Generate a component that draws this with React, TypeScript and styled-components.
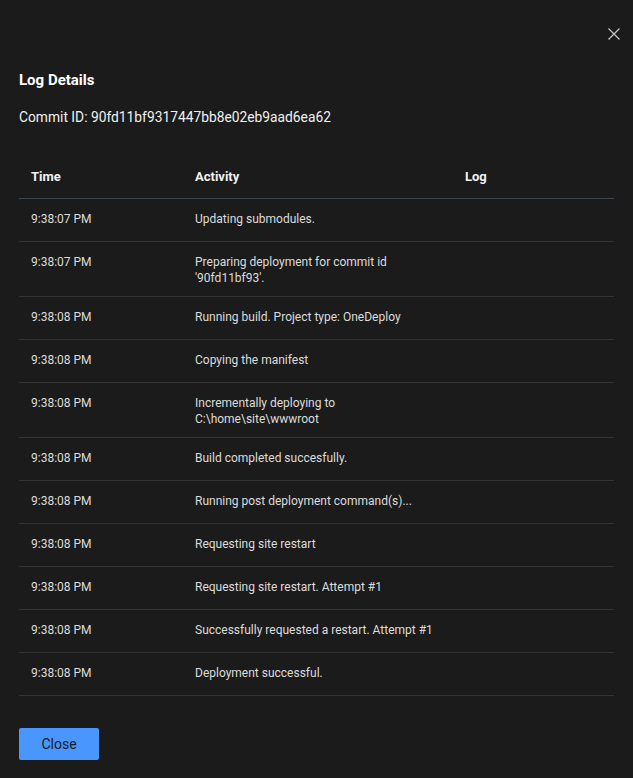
import React from "react";
import styled, { createGlobalStyle } from "styled-components";

const Global = createGlobalStyle`
  html, body { margin: 0; padding: 0; background: #1b1b1b; }
  body { font-family: Roboto, "Noto Sans", sans-serif; color: #e6e6e6; }
  * { box-sizing: border-box; }
`;

const Dialog = styled.div`
  width: 633px;
  height: 778px;
  background: #1b1b1b;
  padding: 0 19px;
  display: flex;
  flex-direction: column;
`;

const TopBar = styled.div`
  display: flex;
  justify-content: flex-end;
  padding-top: 28px;
  margin-right: -6px;
  height: 42px;
`;

const CloseIcon = styled.button`
  width: 12px;
  height: 12px;
  padding: 0;
  border: none;
  background: transparent;
  color: #c8c8c8;
  display: flex;
  align-items: center;
  justify-content: center;
`;

const Title = styled.h1`
  margin: 28px 0 0;
  font-size: 15px;
  font-weight: 700;
  color: #ffffff;
  line-height: 20px;
`;

const Commit = styled.div`
  margin-top: 17px;
  font-size: 13.8px;
  line-height: 20px;
  color: #f0f0f0;
`;

const Table = styled.div`
  margin-top: 28px;
  display: flex;
  flex-direction: column;
`;

const Row = styled.div<{ $head?: boolean }>`
  display: grid;
  grid-template-columns: 164px 270px 1fr;
  border-bottom: 1px solid ${(p) => (p.$head ? "#3a4350" : "#333333")};
  min-height: ${(p) => (p.$head ? "44px" : "43px")};
`;

const HeadCell = styled.div`
  padding: 0 12px;
  font-size: 13px;
  font-weight: 700;
  color: #f2f2f2;
  display: flex;
  align-items: center;
`;

const Cell = styled.div`
  padding: 12px 12px 10px;
  font-size: 12px;
  line-height: 16px;
  color: #dcdcdc;
`;

const Footer = styled.div`
  padding-top: 32px;
`;

const PrimaryButton = styled.button`
  width: 80px;
  height: 32px;
  background: #4a96ff;
  color: #1b1b1b;
  border: none;
  border-radius: 2px;
  font-family: inherit;
  font-size: 14px;
  cursor: pointer;
`;

const rows: [string, string][] = [
  ["9:38:07 PM", "Updating submodules."],
  ["9:38:07 PM", "Preparing deployment for commit id '90fd11bf93'."],
  ["9:38:08 PM", "Running build. Project type: OneDeploy"],
  ["9:38:08 PM", "Copying the manifest"],
  ["9:38:08 PM", "Incrementally deploying to C:\\home\\site\\wwwroot"],
  ["9:38:08 PM", "Build completed succesfully."],
  ["9:38:08 PM", "Running post deployment command(s)..."],
  ["9:38:08 PM", "Requesting site restart"],
  ["9:38:08 PM", "Requesting site restart. Attempt #1"],
  ["9:38:08 PM", "Successfully requested a restart. Attempt #1"],
  ["9:38:08 PM", "Deployment successful."],
];

export default function App() {
  return (
    <Dialog>
      <Global />
      <TopBar>
        <CloseIcon aria-label="Close">
          <svg width="12" height="12" viewBox="0 0 12 12" fill="none" stroke="currentColor" strokeWidth="1.2">
            <path d="M0.5 0.5 L11.5 11.5 M11.5 0.5 L0.5 11.5" />
          </svg>
        </CloseIcon>
      </TopBar>
      <Title>Log Details</Title>
      <Commit>Commit ID: 90fd11bf9317447bb8e02eb9aad6ea62</Commit>
      <Table>
        <Row $head>
          <HeadCell>Time</HeadCell>
          <HeadCell>Activity</HeadCell>
          <HeadCell>Log</HeadCell>
        </Row>
        {rows.map(([t, a], i) => (
          <Row key={i}>
            <Cell>{t}</Cell>
            <Cell>{a}</Cell>
            <Cell />
          </Row>
        ))}
      </Table>
      <Footer>
        <PrimaryButton>Close</PrimaryButton>
      </Footer>
    </Dialog>
  );
}
